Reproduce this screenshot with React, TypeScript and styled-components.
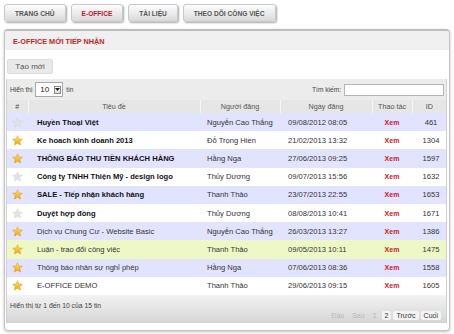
import React from 'react';
import styled, { createGlobalStyle } from 'styled-components';

const Global = createGlobalStyle`
  html, body { margin: 0; padding: 0; background: #fff; }
  body { font-family: "Liberation Sans", Arial, sans-serif; }
  * { box-sizing: border-box; }
`;

const Page = styled.div`
  width: 454px;
  height: 334px;
  padding: 4px 4px 0 4px;
  overflow: hidden;
`;

const Tabs = styled.nav`
  display: flex;
  gap: 5px;
  height: 18px;
`;

const Tab = styled.div<{ $active?: boolean }>`
  height: 18px;
  padding: 0 10px;
  display: flex;
  align-items: center;
  font-size: 6.6px;
  font-weight: bold;
  color: ${p => (p.$active ? '#c8102e' : '#555')};
  background: linear-gradient(#fdfdfd, #d9d9d9);
  border: 1px solid #c9c9c9;
  border-radius: 3px;
  box-shadow: 1px 1px 2px rgba(0, 0, 0, 0.35);
`;

const Panel = styled.section`
  margin-top: 7px;
  width: 446px;
  height: 302px;
  border: 1px solid #c4c4c4;
  border-top: 2px solid #bdbdbd;
  border-radius: 4px;
  box-shadow: 0 1px 3px rgba(0, 0, 0, 0.25);
  display: flex;
  flex-direction: column;
  overflow: hidden;
`;

const PanelHeader = styled.header`
  height: 19px;
  flex: none;
  background: #f0f0f0;
  padding: 1px 0 0 8px;
  display: flex;
  align-items: center;
  font-size: 7.3px;
  font-weight: bold;
  color: #c0272d;
`;

const PanelBody = styled.div`
  padding: 0 2px 0 1px;
  display: flex;
  flex-direction: column;
`;

const Button = styled.div`
  margin: 9px 0 5px 1px;
  height: 15px;
  width: 46px;
  display: flex;
  align-items: center;
  justify-content: center;
  background: #e9e9e9;
  border: 1px solid #dcdcdc;
  border-radius: 2px;
  font-size: 8px;
  color: #555;
`;

const Wrapper = styled.div`
  border-left: 1px solid #cfcfcf;
  border-right: 1px solid #cfcfcf;
  display: flex;
  flex-direction: column;
`;

const Toolbar = styled.div`
  height: 21px;
  background: #ececec;
  display: flex;
  align-items: center;
  justify-content: space-between;
  padding: 0 2px 0 3px;
  font-size: 6.6px;
  color: #444;
`;

const Group = styled.div`
  display: flex;
  align-items: center;
  gap: 3px;
`;

const Select = styled.div`
  width: 28px;
  height: 15px;
  background: #fff;
  border: 1px solid #a9a9a9;
  display: flex;
  align-items: center;
  justify-content: space-between;
  padding: 0 1px 0 4px;
  font-size: 8px;
  color: #222;
`;

const Arrow = styled.div`
  width: 7px;
  height: 8px;
  border: 1px solid #8c8c8c;
  background: linear-gradient(#fafafa, #dcdcdc);
  display: flex;
  align-items: center;
  justify-content: center;
`;

const Input = styled.div`
  width: 100px;
  height: 12px;
  background: #fff;
  border: 1px solid #b5b5b5;
`;

const Table = styled.table`
  width: 100%;
  border-collapse: collapse;
  table-layout: fixed;
  font-size: 7.6px;
`;

const Th = styled.th`
  height: 13px;
  padding: 0;
  background: #e6e6e6;
  border-left: 1px solid #f6f6f6;
  font-weight: normal;
  color: #555;
  text-align: center;
  font-size: 7.2px;
  &:first-child { border-left: none; }
`;

const Tr = styled.tr<{ $bg: string }>`
  height: 18.2px;
  background: ${p => p.$bg};
`;

const Td = styled.td<{ $align?: string; $pl?: number; $bold?: boolean; $color?: string }>`
  padding: 0 0 0 ${p => p.$pl ?? 0}px;
  text-align: ${p => p.$align ?? 'left'};
  font-weight: ${p => (p.$bold ? 'bold' : 'normal')};
  color: ${p => p.$color ?? '#333'};
  white-space: nowrap;
  overflow: hidden;
  vertical-align: middle;
`;

const Xem = styled.span`
  color: #d0161f;
  font-weight: bold;
  font-size: 7px;
`;

const StarBox = styled.span`
  display: inline-flex;
  vertical-align: middle;
`;

const Footer = styled.div`
  height: 28px;
  background: linear-gradient(#f3f3f3, #d6d6d6);
  border-bottom: 1px solid #cfcfcf;
  padding: 7px 5px 0 3px;
  display: flex;
  flex-direction: column;
  font-size: 6.8px;
  color: #444;
`;

const Pager = styled.div`
  display: flex;
  justify-content: flex-end;
  gap: 2px;
  margin-top: 2px;
`;

const PageBtn = styled.span<{ $disabled?: boolean }>`
  padding: 1px 3px;
  border-radius: 2px;
  font-size: 7px;
  color: ${p => (p.$disabled ? '#b9b9b9' : '#333')};
  background: ${p => (p.$disabled ? 'transparent' : '#f4f4f4')};
`;

const Star: React.FC<{ gold: boolean }> = ({ gold }) => (
  <StarBox>
    <svg width="11" height="11" viewBox="0 0 24 24">
      <defs>
        <linearGradient id="sg" x1="0" y1="0" x2="0" y2="1">
          <stop offset="0" stopColor="#ffe27a" />
          <stop offset="1" stopColor="#f2a800" />
        </linearGradient>
      </defs>
      <polygon
        points="12,1.5 15.1,8.6 22.8,9.3 17,14.4 18.7,22 12,18 5.3,22 7,14.4 1.2,9.3 8.9,8.6"
        fill={gold ? 'url(#sg)' : '#e2e2e2'}
        stroke={gold ? '#d99400' : '#d2d2d2'}
        strokeWidth="1"
        strokeLinejoin="round"
      />
    </svg>
  </StarBox>
);

type Row = { t: string; a: string; d: string; id: number; gold: boolean; bold: boolean };

const rows: Row[] = [
  { t: 'Huyền Thoại Việt', a: 'Nguyễn Cao Thắng', d: '09/08/2012 08:05', id: 461, gold: false, bold: true },
  { t: 'Ke hoach kinh doanh 2013', a: 'Đỗ Trọng Hiền', d: '21/02/2013 13:32', id: 1304, gold: true, bold: true },
  { t: 'THÔNG BÁO THU TIỀN KHÁCH HÀNG', a: 'Hằng Nga', d: '27/06/2013 09:25', id: 1597, gold: true, bold: true },
  { t: 'Công ty TNHH Thiện Mỹ - design logo', a: 'Thủy Dương', d: '09/07/2013 15:56', id: 1632, gold: false, bold: true },
  { t: 'SALE - Tiếp nhận khách hàng', a: 'Thanh Thảo', d: '23/07/2013 22:55', id: 1653, gold: true, bold: true },
  { t: 'Duyệt hợp đồng', a: 'Thủy Dương', d: '08/08/2013 10:41', id: 1671, gold: false, bold: true },
  { t: 'Dịch vụ Chung Cư - Website Basic', a: 'Nguyễn Cao Thắng', d: '26/03/2013 13:27', id: 1386, gold: true, bold: false },
  { t: 'Luận - trao đổi công việc', a: 'Thanh Thảo', d: '09/05/2013 10:11', id: 1475, gold: true, bold: false },
  { t: 'Thông báo nhân sự nghỉ phép', a: 'Hằng Nga', d: '07/06/2013 08:36', id: 1558, gold: true, bold: false },
  { t: 'E-OFFICE DEMO', a: 'Thanh Thảo', d: '29/06/2013 09:15', id: 1605, gold: true, bold: false },
];

const rowBg = (i: number) => (i === 7 ? '#edf8c6' : i % 2 === 0 ? '#e2e4ff' : '#ffffff');

export default function App() {
  return (
    <Page>
      <Global />
      <Tabs>
        <Tab>TRANG CHỦ</Tab>
        <Tab $active>E-OFFICE</Tab>
        <Tab>TÀI LIỆU</Tab>
        <Tab>THEO DÕI CÔNG VIỆC</Tab>
      </Tabs>
      <Panel>
        <PanelHeader>E-OFFICE MỚI TIẾP NHẬN</PanelHeader>
        <PanelBody>
          <Button>Tạo mới</Button>
          <Wrapper>
            <Toolbar>
              <Group>
                <span>Hiển thị</span>
                <Select>
                  <span>10</span>
                  <Arrow>
                    <svg width="5" height="3" viewBox="0 0 5 3">
                      <polygon points="0,0 5,0 2.5,3" fill="#222" />
                    </svg>
                  </Arrow>
                </Select>
                <span>tin</span>
              </Group>
              <Group>
                <span>Tìm kiếm:</span>
                <Input />
              </Group>
            </Toolbar>
            <Table>
              <colgroup>
                <col style={{ width: 21 }} />
                <col style={{ width: 172 }} />
                <col style={{ width: 80 }} />
                <col style={{ width: 92 }} />
                <col style={{ width: 40 }} />
                <col />
              </colgroup>
              <thead>
                <tr>
                  <Th>#</Th>
                  <Th>Tiêu đề</Th>
                  <Th>Người đăng</Th>
                  <Th>Ngày đăng</Th>
                  <Th>Thao tác</Th>
                  <Th>ID</Th>
                </tr>
              </thead>
              <tbody>
                {rows.map((r, i) => (
                  <Tr key={r.id} $bg={rowBg(i)}>
                    <Td $align="center">
                      <Star gold={r.gold} />
                    </Td>
                    <Td $pl={9} $bold={r.bold} $color={r.bold ? '#111' : '#333'}>
                      {r.t}
                    </Td>
                    <Td $pl={7}>{r.a}</Td>
                    <Td $pl={8}>{r.d}</Td>
                    <Td $align="center">
                      <Xem>Xem</Xem>
                    </Td>
                    <Td $align="center" $pl={4}>{r.id}</Td>
                  </Tr>
                ))}
              </tbody>
            </Table>
            <Footer>
              <span>Hiển thị từ 1 đến 10 của 15 tin</span>
              <Pager>
                <PageBtn $disabled>Đầu</PageBtn>
                <PageBtn $disabled>Sau</PageBtn>
                <PageBtn $disabled>1</PageBtn>
                <PageBtn>2</PageBtn>
                <PageBtn>Trước</PageBtn>
                <PageBtn>Cuối</PageBtn>
              </Pager>
            </Footer>
          </Wrapper>
        </PanelBody>
      </Panel>
    </Page>
  );
}
